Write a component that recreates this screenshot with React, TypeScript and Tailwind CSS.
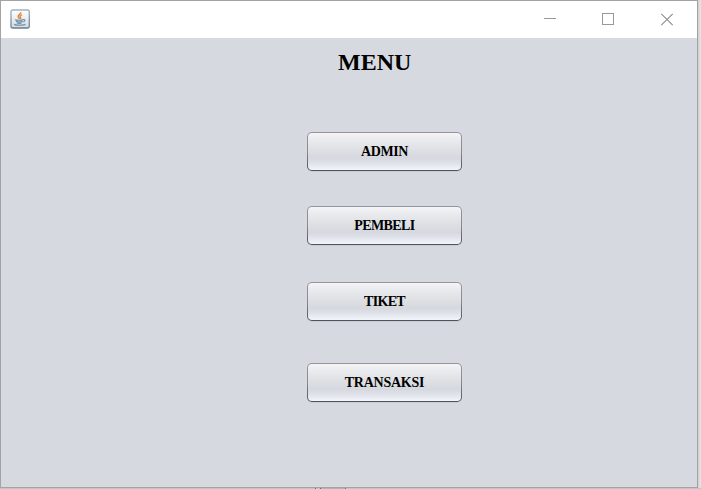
import React from "react";

type MenuItem = { label: string; gap: string; text: string };

const items: MenuItem[] = [
  { label: "ADMIN", gap: "mt-[56px]", text: "tracking-[-0.35px]" },
  { label: "PEMBELI", gap: "mt-[35px]", text: "tracking-[-0.6px]" },
  { label: "TIKET", gap: "mt-[37px]", text: "tracking-[-0.7px]" },
  { label: "TRANSAKSI", gap: "mt-[42px]", text: "tracking-[-0.25px]" },
];

function JavaIcon() {
  return (
    <svg width="20" height="20" viewBox="0 0 20 20" className="block">
      <defs>
        <linearGradient id="tile" x1="0" y1="0" x2="0" y2="1">
          <stop offset="0" stopColor="#ffffff" />
          <stop offset="1" stopColor="#d5d8dc" />
        </linearGradient>
        <linearGradient id="rim" x1="0" y1="0" x2="0" y2="1">
          <stop offset="0" stopColor="#a0b3c0" />
          <stop offset="1" stopColor="#627f96" />
        </linearGradient>
      </defs>
      <rect x="1" y="1" width="18.3" height="18" rx="1.5" fill="url(#tile)" stroke="url(#rim)" strokeWidth="1.3" />
      <path d="M10.8 3.2c.3 1.8-3 2.4-2.6 4.4.2 1 1 1.4 1.3 2.3M12 5.6c-1.9.8-2.5 1.6-1.6 2.7.5.6.3 1.2-.1 1.7" fill="none" stroke="#e08c3e" strokeWidth="1.5" />
      <path d="M5 10.7c1.6.7 6.4.7 8 0M6 12.3c1.5.7 5 .7 6.4 0M6.8 13.7c1.3.6 3.9.6 4.8 0M13 10.6c2.6-.5 2.6 1.9-.3 2.4" fill="none" stroke="#6888a3" strokeWidth="1.1" />
      <path d="M4.2 15.2c1.2 1.3 9.8 1.3 11.2 0" fill="none" stroke="#7292ad" strokeWidth="1.3" />
    </svg>
  );
}

function TitleBar() {
  return (
    <header className="flex h-[37px] shrink-0 items-start justify-between bg-white pl-[9px] pr-[23px]">
      <div className="pt-2">
        <JavaIcon />
      </div>
      <div className="flex pt-3 text-[#999999]">
        <svg width="12" height="12" className="mr-[46px] block">
          <path d="M0 5.5h12" stroke="currentColor" shapeRendering="crispEdges" />
        </svg>
        <svg width="12" height="12" className="mr-[47px] block">
          <rect x="0.5" y="0.5" width="11" height="11" fill="none" stroke="currentColor" shapeRendering="crispEdges" />
        </svg>
        <svg width="13" height="13" className="block">
          <path d="M.3.8l11.4 11.4M11.7.8L.3 12.2" stroke="#8b8b8b" strokeWidth="1.1" />
        </svg>
      </div>
    </header>
  );
}

function MenuButton({ item }: { item: MenuItem }) {
  return (
    <button
      className={`ml-[306px] block h-[39px] w-[155px] shrink-0 rounded-[5px] bg-linear-to-b from-[#94969d] via-[#888a91] to-[#4e525b] p-px shadow-[0_1px_0_#c9ccd4] ${item.gap}`}
    >
      <span className="flex h-full w-full items-center justify-center rounded-[4px] bg-[linear-gradient(to_bottom,#f5f5f7_0%,#eaebee_18%,#dddfe3_48%,#d5d8df_68%,#dfe2e9_82%,#f2f5fa_100%)]">
        <span className={`text-[14px] leading-[16px] font-bold text-black ${item.text}`}>{item.label}</span>
      </span>
    </button>
  );
}

export default function App() {
  return (
    <div className="flex h-[489px] w-[701px] flex-col overflow-hidden bg-[#c9c9c9] font-['Liberation_Serif',serif]">
      <div className="flex h-[488px] shrink-0">
        <div className="flex h-[488px] w-[698px] flex-col border border-[#a3a3a3] bg-[#d6d9df]">
          <TitleBar />
          <main className="flex flex-1 flex-col">
            <h1 className="ml-[337px] mt-[10px] h-7 text-[24px] leading-7 font-bold text-black">MENU</h1>
            {items.map((item) => (
              <MenuButton key={item.label} item={item} />
            ))}
          </main>
        </div>
        <div className="w-[3px] bg-linear-to-r from-[#cfcfcf] to-[#e8e8e8]" />
      </div>
      <div className="flex h-px shrink-0 bg-[#c4c4c4] pl-[315px]">
        <i className="h-px w-px bg-[#686868]" />
        <i className="ml-1 h-px w-px bg-[#686868]" />
        <i className="h-px w-6 bg-[#b2b2b2]" />
        <i className="h-px w-px bg-[#777777]" />
      </div>
    </div>
  );
}
